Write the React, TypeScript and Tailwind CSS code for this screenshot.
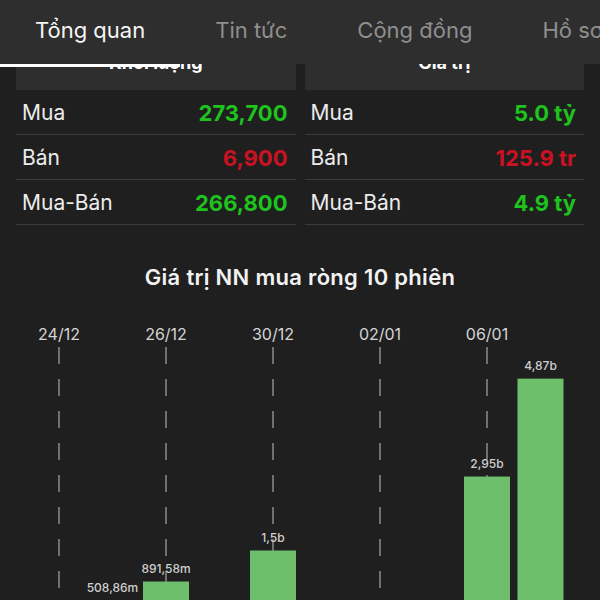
import React from 'react';

interface Row {
  label: string;
  value: string;
  up: boolean;
}

interface Bar {
  value: number;
  text: string;
}

const tabs = ['Tổng quan', 'Tin tức', 'Cộng đồng', 'Hồ sơ'];

const volumeRows: Row[] = [
  { label: 'Mua', value: '273,700', up: true },
  { label: 'Bán', value: '6,900', up: false },
  { label: 'Mua-Bán', value: '266,800', up: true },
];

const valueRows: Row[] = [
  { label: 'Mua', value: '5.0 tỷ', up: true },
  { label: 'Bán', value: '125.9 tr', up: false },
  { label: 'Mua-Bán', value: '4.9 tỷ', up: true },
];

// 10 sessions, negatives run below the fold
const bars: Bar[] = [
  { value: -0.42, text: '-420,1m' },
  { value: 0.50886, text: '508,86m' },
  { value: 0.89158, text: '891,58m' },
  { value: -0.31, text: '-310,5m' },
  { value: 1.5, text: '1,5b' },
  { value: -0.65, text: '-650,2m' },
  { value: -1.2, text: '-1,2b' },
  { value: -0.2, text: '-201,4m' },
  { value: 2.95, text: '2,95b' },
  { value: 4.87, text: '4,87b' },
];

const dates = ['24/12', '26/12', '30/12', '02/01', '06/01'];

const StatTable: React.FC<{ title: string; rows: Row[] }> = ({ title, rows }) => (
  <div className="flex-1">
    <div className="h-[48px] pb-[8px] bg-[#2e2e2e] flex items-center justify-center text-[18px] font-bold text-white">
      {title}
    </div>
    {rows.map(row => (
      <div
        key={row.label}
        className="h-[45px] pt-[2px] flex items-center justify-between pl-[6px] pr-[8px] border-b border-[#3a3a3a]"
      >
        <span className="text-[21px] text-[#ececec]">{row.label}</span>
        <span className={`text-[22px] font-bold ${row.up ? 'text-[#1ec31e]' : 'text-[#cc1222]'}`}>
          {row.value}
        </span>
      </div>
    ))}
  </div>
);

const NetBuyChart: React.FC = () => {
  const step = 53.5;
  const barW = 46;
  const base = 327;
  const scale = 51;

  return (
    <svg width="600" height="330" className="block">
      {dates.map((d, i) => {
        const cx = 36 + step * i * 2 + barW / 2;
        return (
          <g key={d}>
            <text x={cx} y={40} textAnchor="middle" fontSize="16" fill="#d4d4d4">
              {d}
            </text>
            <line
              x1={cx}
              y1={47}
              x2={cx}
              y2={330}
              stroke="#8c8c8c"
              strokeWidth="1.5"
              strokeDasharray="17 15"
            />
          </g>
        );
      })}
      {bars.map((b, i) => {
        const x = 36 + step * i;
        const h = Math.abs(b.value) * scale;
        const top = b.value >= 0 ? base - h : base;
        return (
          <g key={i}>
            <rect x={x} y={top} width={barW} height={h} fill={b.value >= 0 ? '#6dbf6b' : '#d9534f'} />
            {b.value >= 0 && (
              <text
                x={x + barW / 2}
                y={top - 9}
                textAnchor="middle"
                fontSize="12"
                fontWeight="500"
                fill="#cfcfcf"
              >
                {b.text}
              </text>
            )}
          </g>
        );
      })}
    </svg>
  );
};

export default function App() {
  return (
    <div
      className="w-[600px] h-[600px] overflow-hidden bg-[#1f1f1f] text-white"
      style={{ fontFamily: 'Inter, "Noto Sans", sans-serif' }}
    >
      {/* Tab bar */}
      <div className="relative z-10 h-[64px] pb-[4px] bg-[#2e2e2e] flex items-center whitespace-nowrap">
        {tabs.map((t, i) => (
          <div
            key={t}
            className={`shrink-0 px-[35px] text-[22px] ${i === 0 ? 'text-[#f5f5f5]' : 'text-[#8f8f8f]'}`}
          >
            {t}
          </div>
        ))}
        <div className="absolute left-0 top-[64px] w-[180px] h-[3px] bg-white" />
      </div>

      {/* Foreign trading tables */}
      <div className="flex gap-[9px] px-[16px] -mt-[22px]">
        <StatTable title="Khối lượng" rows={volumeRows} />
        <StatTable title="Giá trị" rows={valueRows} />
      </div>

      <div className="mt-[38px] text-center text-[22px] tracking-[0.3px] font-semibold leading-[28px] text-[#f2f2f2]">
        Giá trị NN mua ròng 10 phiên
      </div>

      <div className="mt-[9px]">
        <NetBuyChart />
      </div>
    </div>
  );
}
